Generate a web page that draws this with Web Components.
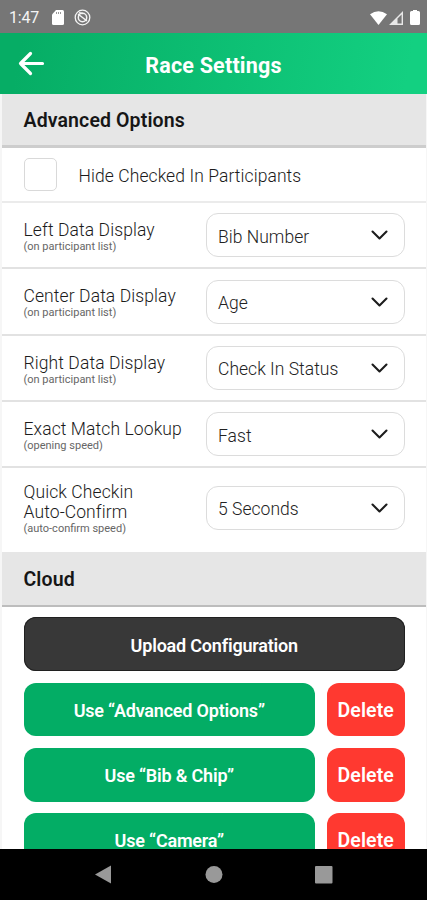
<!DOCTYPE html>
<html lang="en">
<head>
<meta charset="utf-8">
<title>Race Settings</title>
<style>
html,body{margin:0;height:100%;overflow:hidden}
body{font-family:Roboto,"Liberation Sans",sans-serif;color:#222;background:#fff}
</style>
</head>
<body>
<race-settings-app></race-settings-app>
<script>
const define = (name, css, html) => customElements.define(name, class extends HTMLElement {
  constructor() {
    super();
    const t = document.createElement('template');
    t.innerHTML = `<style>*{box-sizing:border-box}${css}</style>${html}`;
    this.attachShadow({mode: 'open'}).append(t.content.cloneNode(true));
  }
});

define('status-bar', `
:host{display:flex;align-items:center;height:33px;background:#767676;color:#f4f4f4;padding:2px 6px 0 9px;font-size:16px;box-sizing:border-box}
.time{width:43px;letter-spacing:-.2px}
svg{display:block}.gap{flex:1}`, `
<span class="time">1:47</span>
<svg width="12" height="15" viewBox="0 0 12 15"><path fill="#fff" d="M4 0h6.500Q12 0 12 1.500v12Q12 15 10.500 15h-9Q0 15 0 13.500V4.500z"/><path stroke="#999" stroke-width="1" d="M4.500 2v2M6.500 2v2M8.500 2v2"/></svg>
<svg style="margin-left:10px" width="17" height="17" viewBox="0 0 17 17" fill="none" stroke="#f4f4f4"><circle cx="8.500" cy="8.500" r="7.300" stroke-width="1.300"/><circle cx="8.500" cy="8.500" r="4.200" stroke-width="1.500"/><path stroke-width="1.500" d="M4 5l9 7M5 3.700l4 .8"/></svg>
<span class="gap"></span>
<svg width="17" height="14" viewBox="0 0 17 14"><path fill="#fff" d="M0 3.200Q8.500-2.800 17 3.200L8.500 14z"/></svg>
<svg style="margin-left:2px" width="14" height="14" viewBox="0 0 14 14"><path fill="#e8e8e8" fill-rule="evenodd" d="M14 0v14H0zM12.600 3.400L8.500 7.500v5.100h4.100z"/></svg>
<svg style="margin:0 1px 0 7px" width="10" height="15" viewBox="0 0 10 15"><path fill="#fff" d="M3 0h4v1h1.500Q10 1 10 2.500v11Q10 15 8.500 15h-7Q0 15 0 13.500v-11Q0 1 1.500 1H3z"/></svg>`);

define('title-bar', `
:host{display:grid;grid-template-columns:64px 1fr 64px;align-items:center;height:61px;background:linear-gradient(100deg,#06ad65 5%,#13d081 95%);color:#fff}
h1{margin:3px 0 0;font-size:21.500px;line-height:25px;font-weight:750;text-align:center;letter-spacing:.2px}
svg{display:block;margin-left:18px}`, `
<svg width="27" height="26" viewBox="0 0 27 26" fill="none" stroke="#fff" stroke-width="3.200" stroke-linecap="round" stroke-linejoin="round"><path d="M24.500 12.500H2.500M12.500 2.500L2.500 12.500l10 10"/></svg>
<h1><slot></slot></h1>`);

define('section-heading', `
:host{display:flex;align-items:center;height:54px;background:#e6e6e6;border-bottom:3px solid #cdcdcd;padding:2px 21.500px 0;box-sizing:border-box}
:host([thin]){height:54.500px;border-bottom:2px solid #bdbdbd}
h2{margin:0;font-size:19.500px;line-height:24px;font-weight:600;color:#161616;letter-spacing:.12px}`, `<h2><slot></slot></h2>`);

define('check-row', `
:host{display:flex;align-items:center;height:55px;border-bottom:2px solid #ebebeb;padding:0 22px;box-sizing:border-box}
i{width:33px;height:33px;border:1.500px solid #d9d9d9;border-radius:5px;margin-right:21.500px}
span{font-size:17.500px;padding-top:3px;letter-spacing:.08px;font-weight:350;color:#1b1b1b}`, `<i></i><span><slot></slot></span>`);

define('select-box', `
:host{display:flex;align-items:center;justify-content:space-between;width:199px;height:44px;border:1.500px solid #dcdcdc;border-radius:12px;padding:3px 16px 0 11px;font-size:17.500px;font-weight:350;letter-spacing:.03px;color:#222;box-sizing:border-box}
svg{margin-top:-2px}`, `
<span><slot></slot></span>
<svg width="17" height="11" viewBox="0 0 17 11" fill="none" stroke="#1d1d1d" stroke-width="2.100" stroke-linecap="round" stroke-linejoin="round"><path d="M1.500 1.500l7 7 7-7"/></svg>`);

define('setting-row', `
:host{display:flex;align-items:flex-start;height:var(--h,66.300px);border-bottom:2px solid #e2e2e2;padding:var(--pt,10.300px) 20.500px 0 21.500px;box-sizing:border-box}
.l{flex:1;padding-top:var(--lp,6.700px);margin-top:var(--lm,0)}
.t{font-size:17.500px;line-height:20px;font-weight:350;color:#1b1b1b;letter-spacing:.1px;white-space:nowrap}
.s{font-size:11px;line-height:14px;color:#666}`, `
<div class="l"><div class="t"><slot></slot></div><div class="s"><slot name="note"></slot></div></div><slot name="control"></slot>`);

define('action-button', `
:host{display:flex;align-items:center;justify-content:center;height:53.700px;border-radius:12px;background:#03ad65;color:#fff;font-weight:600;font-size:18px;letter-spacing:-.2px;flex:1;padding-top:2px;box-sizing:border-box}
:host([kind=dark]){background:#383838;box-shadow:inset 0 0 0 1px #202020}
:host([kind=delete]){background:#ff3930;flex:0 0 78.500px;font-size:19.500px;letter-spacing:.1px}`, `<slot></slot>`);

define('button-row', `:host{display:flex;gap:11.500px}`, `<slot></slot>`);

define('nav-bar', `
:host{display:flex;align-items:center;height:51px;background:#000;padding-left:95px;box-sizing:border-box}
svg{display:block}`, `
<svg width="240" height="20" viewBox="0 0 240 20" fill="#999"><path d="M16 .5v18L0 9.500z"/><circle cx="119" cy="9.500" r="8.500"/><rect x="220" y="1" width="17.500" height="17.500" rx="1"/></svg>`);

define('race-settings-app', `
:host{display:flex;flex-direction:column;height:900px;width:427px}
main{flex:1;min-height:0;overflow:hidden;border-left:2px solid #f6f6f6;border-right:1px solid #f6f6f6}
.buttons{display:flex;flex-direction:column;gap:11.500px;padding:10.500px 21px 0 21.500px}
.last{--h:84.300px;--pt:17.800px;--lp:0;--lm:-4px;border-bottom:0}
setting-row{padding-right:21px}`, `
<status-bar></status-bar>
<title-bar>Race Settings</title-bar>
<main>
<section-heading>Advanced Options</section-heading>
<check-row>Hide Checked In Participants</check-row>
<setting-row>Left Data Display<span slot="note">(on participant list)</span><select-box slot="control">Bib Number</select-box></setting-row>
<setting-row>Center Data Display<span slot="note">(on participant list)</span><select-box slot="control">Age</select-box></setting-row>
<setting-row>Right Data Display<span slot="note">(on participant list)</span><select-box slot="control">Check In Status</select-box></setting-row>
<setting-row>Exact Match Lookup<span slot="note">(opening speed)</span><select-box slot="control">Fast</select-box></setting-row>
<setting-row class="last">Quick Checkin<br>Auto-Confirm<span slot="note">(auto-confirm speed)</span><select-box slot="control">5 Seconds</select-box></setting-row>
<section-heading thin>Cloud</section-heading>
<div class="buttons">
<button-row><action-button kind="dark">Upload Configuration</action-button></button-row>
<button-row><action-button>Use “Advanced Options”</action-button><action-button kind="delete">Delete</action-button></button-row>
<button-row><action-button>Use “Bib &amp; Chip”</action-button><action-button kind="delete">Delete</action-button></button-row>
<button-row><action-button>Use “Camera”</action-button><action-button kind="delete">Delete</action-button></button-row>
</div>
</main>
<nav-bar></nav-bar>`);
</script>
</body>
</html>
